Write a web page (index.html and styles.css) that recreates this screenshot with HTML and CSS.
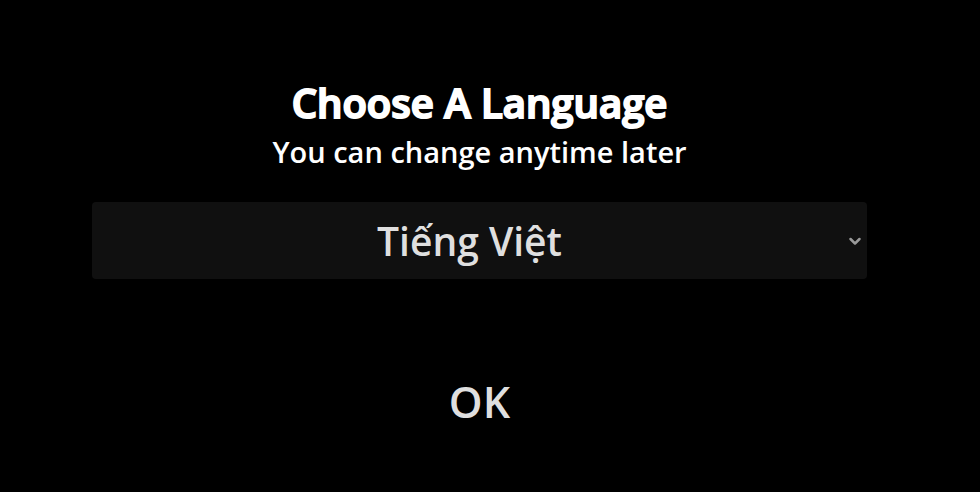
FILE: index.html
```html
<!DOCTYPE html>
<html lang="en">
<head>
    <meta charset="UTF-8">
    <meta name="viewport" content="width=device-width, initial-scale=1.0">
    <title>Choose A Language</title>
    <link rel="stylesheet" href="styles.css">
</head>
<body>
    <form class="language-form">
        <h1 class="title">Choose A Language</h1>
        <label class="subtitle" for="language">You can change anytime later</label>
        <div class="select-box">
            <select class="language-select" id="language">
                <option lang="vi" selected>Tiếng Việt</option>
            </select>
            <svg class="arrow" viewBox="0 0 16 16" aria-hidden="true">
                <path d="M3.5 6l4.5 4.5 4.5-4.5"/>
            </svg>
        </div>
        <button class="ok-button" type="button">OK</button>
    </form>
</body>
</html>
```
FILE: styles.css
```css
* {
    box-sizing: border-box;
}
body {
    margin: 0;
    padding: 0 113px 0 92px;
    background: #000;
    color: #fff;
    font-family: "Open Sans", "Noto Sans", sans-serif;
    font-weight: 600;
}
.language-form {
    display: flex;
    flex-direction: column;
    align-items: center;
    padding: 75px 0 56px;
    text-align: center;
}
.title {
    margin: 0;
    font-size: 40px;
    line-height: 56px;
    font-weight: 600;
    -webkit-text-stroke: 2px #fff;
}
.subtitle {
    font-size: 29px;
    line-height: 42px;
}
.select-box {
    position: relative;
    width: 100%;
    margin-top: 29px;
}
.language-select {
    display: block;
    width: 100%;
    height: 77px;
    padding: 0 20px 0 0;
    border: none;
    border-radius: 4px;
    background: #101010;
    color: #dfdfdf;
    font: inherit;
    font-size: 39px;
    text-align: center;
    text-align-last: center;
    appearance: none;
}
.arrow {
    position: absolute;
    top: 50%;
    right: 4px;
    width: 16px;
    height: 16px;
    transform: translateY(-50%);
    fill: none;
    stroke: #999;
    stroke-width: 2.5;
    stroke-linecap: round;
    stroke-linejoin: round;
    pointer-events: none;
}
.ok-button {
    margin-top: 91px;
    padding: 0 20px;
    border: none;
    background: none;
    color: #dfdfdf;
    font: inherit;
    font-size: 43px;
    line-height: 64px;
}
```
